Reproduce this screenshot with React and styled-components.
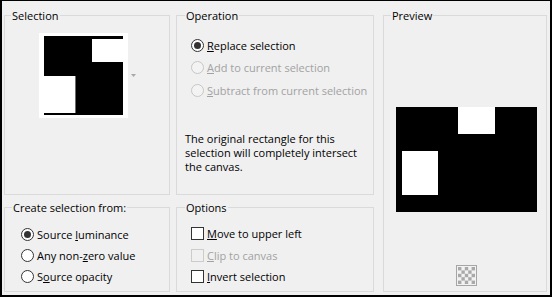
import React from 'react';
import styled, { createGlobalStyle } from 'styled-components';

const Global = createGlobalStyle`
  html, body { margin: 0; padding: 0; background: #f0f0f0; }
  body {
    font-family: "Open Sans", "Noto Sans", sans-serif;
    font-size: 11px;
    color: #000;
  }
`;

const Dialog = styled.div`
  box-sizing: border-box;
  width: 552px;
  height: 297px;
  background: #f0f0f0;
  border: 2px solid #000;
  border-top-width: 1px;
  padding: 7px 3px 3px 2px;
  display: grid;
  grid-template-columns: 166px 198px 1fr;
  grid-template-rows: 187px 92px;
  column-gap: 6px;
  row-gap: 5px;
`;

const Group = styled.fieldset`
  margin: 0;
  margin-left: ${p => p.$shift || 0}px;
  padding: 0;
  min-width: 0;
  border: 1px solid #dadada;
  grid-column: ${p => p.$col};
  grid-row: ${p => p.$row};
  display: flex;
  flex-direction: column;
`;

const Title = styled.legend`
  margin-left: ${p => p.$indent}px;
  padding: 0 1px;
  font-size: 11px;
  line-height: 15px;
  color: #000;
`;

const Body = styled.div`
  flex: 1;
  display: flex;
  flex-direction: column;
  padding: ${p => p.$pad || '0'};
`;

const ThumbRow = styled.div`
  display: flex;
  justify-content: center;
  align-items: center;
  gap: 3px;
  padding-top: 10px;
`;

const ThumbFrame = styled.div`
  background: #fff;
  padding: 3px 5px;
  display: flex;
`;

const OptionRow = styled.label`
  display: flex;
  align-items: center;
  gap: 3px;
  height: ${p => p.$h}px;
  color: ${p => (p.$disabled ? '#a2a2a2' : '#000')};
  white-space: nowrap;
`;

const RadioMark = styled.span`
  box-sizing: border-box;
  width: 13px;
  height: 13px;
  border-radius: 50%;
  border: 1px solid ${p => (p.$disabled ? '#c6c6c6' : '#333')};
  background: ${p => (p.$disabled ? '#f3f3f3' : '#fff')};
  display: flex;
  align-items: center;
  justify-content: center;
  flex: none;
  &::after {
    content: '';
    display: ${p => (p.$checked ? 'block' : 'none')};
    width: 7px;
    height: 7px;
    border-radius: 50%;
    background: #333;
  }
`;

const CheckMark = styled.span`
  box-sizing: border-box;
  width: 13px;
  height: 13px;
  border: 1px solid ${p => (p.$disabled ? '#cccccc' : '#333')};
  background: ${p => (p.$disabled ? '#f0f0f0' : '#fff')};
  flex: none;
`;

const Note = styled.p`
  margin: 30px 0 0 -6px;
  line-height: 14px;
`;

const PreviewBody = styled.div`
  flex: 1;
  display: flex;
  flex-direction: column;
  align-items: center;
  padding: 84px 0 5px 3px;
`;

const IconSlot = styled.div`
  margin-top: auto;
  display: flex;
`;

function Radio({ label, checked, disabled, h }) {
  return (
    <OptionRow $h={h} $disabled={disabled}>
      <RadioMark $checked={checked} $disabled={disabled} />
      <span>{label}</span>
    </OptionRow>
  );
}

function Check({ label, disabled, h }) {
  return (
    <OptionRow $h={h} $disabled={disabled}>
      <CheckMark $disabled={disabled} />
      <span>{label}</span>
    </OptionRow>
  );
}

function Thumb() {
  return (
    <svg width="79" height="79" viewBox="0 0 79 79">
      <rect x="0" y="0" width="79" height="79" fill="#000" />
      <rect x="48" y="3" width="31" height="23" fill="#fff" />
      <rect x="0" y="40" width="31" height="37" fill="#fff" />
      <rect x="31" y="40" width="0.8" height="37" fill="#888" />
    </svg>
  );
}

function DropArrow() {
  return (
    <svg width="5" height="3" viewBox="0 0 5 3">
      <polygon points="0,0 5,0 2.5,3" fill="#a8a8a8" />
    </svg>
  );
}

function PreviewImage() {
  return (
    <svg width="141" height="105" viewBox="0 0 141 105">
      <rect x="0" y="0" width="141" height="105" fill="#000" />
      <rect x="62" y="0" width="37" height="27" fill="#fff" />
      <rect x="6" y="44" width="36" height="44" fill="#fff" />
    </svg>
  );
}

function CheckerIcon() {
  const cells = [];
  for (let r = 0; r < 5; r++) {
    for (let c = 0; c < 5; c++) {
      if ((r + c) % 2 === 0) {
        cells.push(<rect key={`${r}-${c}`} x={2 + c * 3.4} y={2 + r * 3.4} width="3.4" height="3.4" fill="#a9a9a9" />);
      }
    }
  }
  return (
    <svg width="21" height="21" viewBox="0 0 21 21">
      <rect x="0.5" y="0.5" width="20" height="20" fill="#f2f2f2" stroke="#a6a6a6" />
      {cells}
    </svg>
  );
}

export default function App() {
  return (
    <>
      <Global />
      <Dialog>
        <Group $col="1" $row="1">
          <Title $indent={6}>Selection</Title>
          <Body>
            <ThumbRow>
              <ThumbFrame>
                <Thumb />
              </ThumbFrame>
              <DropArrow />
            </ThumbRow>
          </Body>
        </Group>

        <Group $col="2" $row="1">
          <Title $indent={8}>Operation</Title>
          <Body $pad="11px 0 0 14px">
            <Radio h={22.5} checked label={<><u>R</u>eplace selection</>} />
            <Radio h={22.5} disabled label={<><u>A</u>dd to current selection</>} />
            <Radio h={22.5} disabled label={<><u>S</u>ubtract from current selection</>} />
            <Note>
              The original rectangle for this
              <br />
              selection will completely intersect
              <br />
              the canvas.
            </Note>
          </Body>
        </Group>

        <Group $col="3" $row="1 / span 2" $shift={3}>
          <Title $indent={7}>Preview</Title>
          <PreviewBody>
            <PreviewImage />
            <IconSlot>
              <CheckerIcon />
            </IconSlot>
          </PreviewBody>
        </Group>

        <Group $col="1" $row="2">
          <Title $indent={7}>Create selection from:</Title>
          <Body $pad="9px 0 0 16px">
            <Radio h={21} checked label={<>Source <u>l</u>uminance</>} />
            <Radio h={21} label={<>Any non-<u>z</u>ero value</>} />
            <Radio h={21} label={<>S<u>o</u>urce opacity</>} />
          </Body>
        </Group>

        <Group $col="2" $row="2">
          <Title $indent={8}>Options</Title>
          <Body $pad="8px 0 0 14px">
            <Check h={21.5} label={<><u>M</u>ove to upper left</>} />
            <Check h={21.5} disabled label={<><u>C</u>lip to canvas</>} />
            <Check h={21.5} label={<><u>I</u>nvert selection</>} />
          </Body>
        </Group>
      </Dialog>
    </>
  );
}
